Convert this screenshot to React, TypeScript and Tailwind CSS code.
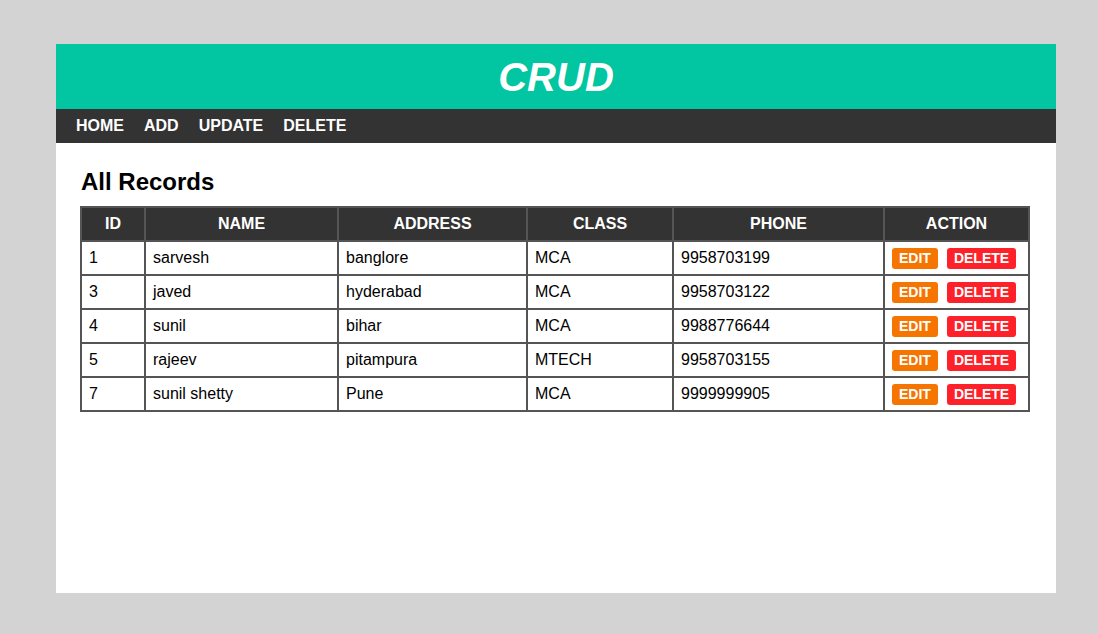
const records = [
  { id: 1, name: "sarvesh", address: "banglore", cls: "MCA", phone: "9958703199" },
  { id: 3, name: "javed", address: "hyderabad", cls: "MCA", phone: "9958703122" },
  { id: 4, name: "sunil", address: "bihar", cls: "MCA", phone: "9988776644" },
  { id: 5, name: "rajeev", address: "pitampura", cls: "MTECH", phone: "9958703155" },
  { id: 7, name: "sunil shetty", address: "Pune", cls: "MCA", phone: "9999999905" },
];

const th = "border-2 border-[#555] bg-[#333] text-white font-bold text-[16px] leading-[18px] py-[7px] text-center";
const td = "border-2 border-[#555] text-[16px] leading-[18px] py-[7px] px-[7px] text-left";

export default function App() {
  return (
    <div className="min-h-screen w-full bg-[#d3d3d3] pt-[44px] font-['Liberation_Sans',Arial,sans-serif]">
      <div className="ml-[56px] w-[1000px] h-[549px] bg-white">
        <header className="h-[65px] bg-[#02c5a1] flex items-center justify-center">
          <h1 className="text-white text-[40px] font-bold italic leading-none">CRUD</h1>
        </header>
        <nav className="h-[34px] bg-[#333] flex items-center pl-[10px]">
          {["HOME", "ADD", "UPDATE", "DELETE"].map((item) => (
            <a key={item} className="px-[10px] text-white font-bold text-[16px]">
              {item}
            </a>
          ))}
        </nav>
        <main className="px-[25px] pt-[25px]">
          <h2 className="text-[24px] font-bold leading-[28px] text-black">All Records</h2>
          <table className="mt-[10px] -ml-px w-[948px] table-fixed border-collapse border-2 border-[#555]">
            <colgroup>
              <col className="w-[64px]" />
              <col className="w-[193px]" />
              <col className="w-[189px]" />
              <col className="w-[146px]" />
              <col className="w-[211px]" />
              <col className="w-[145px]" />
            </colgroup>
            <thead>
              <tr>
                <th className={th}>ID</th>
                <th className={th}>NAME</th>
                <th className={th}>ADDRESS</th>
                <th className={th}>CLASS</th>
                <th className={th}>PHONE</th>
                <th className={th}>ACTION</th>
              </tr>
            </thead>
            <tbody>
              {records.map((r) => (
                <tr key={r.id}>
                  <td className={td}>{r.id}</td>
                  <td className={td}>{r.name}</td>
                  <td className={td}>{r.address}</td>
                  <td className={td}>{r.cls}</td>
                  <td className={td}>{r.phone}</td>
                  <td className="border-2 border-[#555] py-[5px] pl-[7px]">
                    <div className="flex gap-[9px]">
                      <button className="h-[21px] px-[7px] rounded-[3px] bg-[#f57500] text-white font-bold text-[14px] leading-[21px]">
                        EDIT
                      </button>
                      <button className="h-[21px] px-[7px] rounded-[3px] bg-[#ff2129] text-white font-bold text-[14px] leading-[21px]">
                        DELETE
                      </button>
                    </div>
                  </td>
                </tr>
              ))}
            </tbody>
          </table>
        </main>
      </div>
    </div>
  );
}
